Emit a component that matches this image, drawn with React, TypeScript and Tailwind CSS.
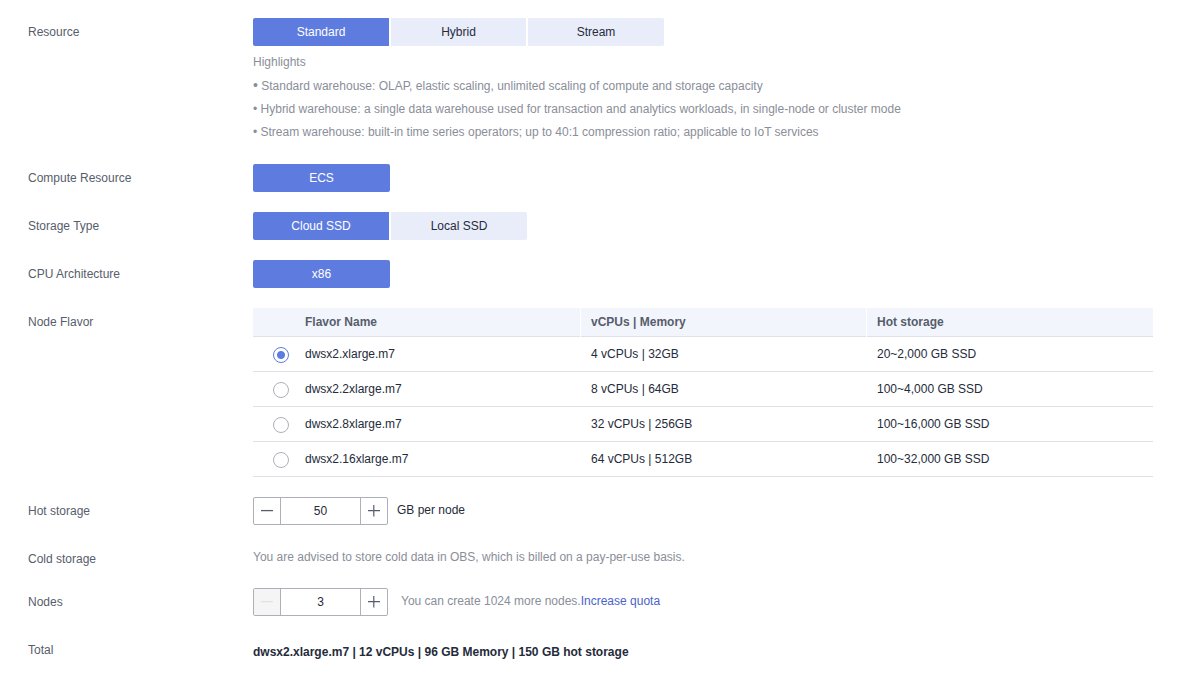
import { useState, type ReactNode } from "react";
import clsx from "clsx";

const flavors = [
  { name: "dwsx2.xlarge.m7", cpu: "4 vCPUs | 32GB", storage: "20~2,000 GB SSD" },
  { name: "dwsx2.2xlarge.m7", cpu: "8 vCPUs | 64GB", storage: "100~4,000 GB SSD" },
  { name: "dwsx2.8xlarge.m7", cpu: "32 vCPUs | 256GB", storage: "100~16,000 GB SSD" },
  { name: "dwsx2.16xlarge.m7", cpu: "64 vCPUs | 512GB", storage: "100~32,000 GB SSD" },
];

function Row({ label, htmlFor, children }: { label: string; htmlFor?: string; children: ReactNode }) {
  return (
    <div className="flex items-start">
      <div className="w-[225px] shrink-0 leading-7 text-[#575d6c]">
        {htmlFor ? <label htmlFor={htmlFor}>{label}</label> : label}
      </div>
      <div className="min-w-0 flex-1">{children}</div>
    </div>
  );
}

function Segmented({ label, options }: { label: string; options: string[] }) {
  const [active, setActive] = useState(options[0]);
  return (
    <div role="group" aria-label={label} className="flex w-fit overflow-hidden rounded-xs">
      {options.map((option) => (
        <button
          key={option}
          type="button"
          aria-pressed={option === active}
          onClick={() => setActive(option)}
          className={clsx(
            "h-7 w-[137px] cursor-pointer border-white not-first:border-l not-last:border-r",
            option === active ? "bg-[#5e7ce0] text-white" : "bg-[#e9edfa] text-[#252b3a]",
          )}
        >
          {option}
        </button>
      ))}
    </div>
  );
}

function Stepper({ id, initial, min, step }: { id: string; initial: number; min: number; step: number }) {
  const [value, setValue] = useState(initial);
  const atMin = value <= min;
  return (
    <div className="flex h-7 w-[135px] overflow-hidden rounded-xs border border-[#adb0b8]">
      <button
        type="button"
        aria-label="Decrease"
        disabled={atMin}
        onClick={() => setValue(value - step)}
        className={clsx(
          "flex w-[26px] items-center justify-center",
          atMin ? "bg-[#f5f5f6] text-[#dfe1e6]" : "text-[#575d6c]",
        )}
      >
        <svg width="12" height="12" viewBox="0 0 12 12" fill="none" stroke="currentColor" strokeWidth="1.3">
          <path d="M0 5.6h12" />
        </svg>
      </button>
      <input
        id={id}
        value={value}
        onChange={(e) => setValue(Number(e.target.value) || 0)}
        className="min-w-0 flex-1 border-x border-[#adb0b8] text-center text-[#252b3a] outline-none"
      />
      <button
        type="button"
        aria-label="Increase"
        onClick={() => setValue(value + step)}
        className="flex w-[26px] items-center justify-center text-[#575d6c]"
      >
        <svg width="12" height="12" viewBox="0 0 12 12" fill="none" stroke="currentColor" strokeWidth="1.2">
          <path d="M0 5.6h12M5.8 0v11.5" />
        </svg>
      </button>
    </div>
  );
}

function FlavorTable() {
  const [selected, setSelected] = useState(flavors[0].name);
  return (
    <table className="w-full table-fixed border-collapse text-left">
      <colgroup>
        <col className="w-[42px]" />
        <col />
        <col />
        <col />
      </colgroup>
      <thead>
        <tr className="h-[29px] bg-[#f2f5fc] text-[#575d6c] shadow-[inset_0_-1px_0_#dfe1e6]">
          <th />
          <th className="px-2.5 pb-0.5 shadow-[inset_-1px_0_0_#fff]">Flavor Name</th>
          <th className="px-2.5 pb-0.5 shadow-[inset_-1px_0_0_#fff]">vCPUs | Memory</th>
          <th className="px-2.5 pb-0.5">Hot storage</th>
        </tr>
      </thead>
      <tbody className="text-[#252b3a]">
        {flavors.map((f, i) => (
          <tr key={f.name} className="h-[35px] shadow-[inset_0_-1px_0_#dfe1e6]">
            <td className="pt-px pl-5 align-middle">
              <input
                type="radio"
                name="flavor"
                aria-labelledby={`flavor-${i}`}
                checked={selected === f.name}
                onChange={() => setSelected(f.name)}
                className="block size-4 appearance-none rounded-full border border-[#adb0b8] bg-white checked:border-[#5e7ce0] checked:bg-[radial-gradient(circle,#5e7ce0_3.5px,#fff_4.5px)]"
              />
            </td>
            <td id={`flavor-${i}`} className="px-2.5 pb-0.5">{f.name}</td>
            <td className="px-2.5 pb-0.5">{f.cpu}</td>
            <td className="px-2.5 pb-0.5">{f.storage}</td>
          </tr>
        ))}
      </tbody>
    </table>
  );
}

export default function App() {
  return (
    <main className="min-h-screen bg-white pt-[18px] pr-[35px] pb-7 pl-7 font-['Liberation_Sans',Arial,sans-serif] text-[12px]">
      <div className="flex flex-col gap-5">
        <Row label="Resource">
          <Segmented label="Resource" options={["Standard", "Hybrid", "Stream"]} />
          <div className="pt-1 text-[#8a8e99]">
            <p className="leading-6">Highlights</p>
            <ul className="pt-px leading-[23px]">
              <li>
                <span className="text-[14px] leading-none">•</span> Standard warehouse: OLAP, elastic scaling, unlimited
                scaling of compute and storage capacity
              </li>
              <li>
                • Hybrid warehouse: a single data warehouse used for transaction and analytics workloads, in single-node or
                cluster mode
              </li>
              <li>
                • Stream warehouse: built-in time series operators; up to 40:1 compression ratio; applicable to IoT services
              </li>
            </ul>
          </div>
        </Row>
        <Row label="Compute Resource">
          <Segmented label="Compute Resource" options={["ECS"]} />
        </Row>
        <Row label="Storage Type">
          <Segmented label="Storage Type" options={["Cloud SSD", "Local SSD"]} />
        </Row>
        <Row label="CPU Architecture">
          <Segmented label="CPU Architecture" options={["x86"]} />
        </Row>
        <Row label="Node Flavor">
          <FlavorTable />
        </Row>
        <Row label="Hot storage" htmlFor="hot-storage">
          <div className="flex gap-[9px]">
            <Stepper id="hot-storage" initial={50} min={20} step={10} />
            <span className="leading-[26px] text-[#252b3a]">GB per node</span>
          </div>
        </Row>
        <div className="flex flex-col gap-[15px]">
          <Row label="Cold storage">
            <p className="leading-6 text-[#8a8e99]">
              You are advised to store cold data in OBS, which is billed on a pay-per-use basis.
            </p>
          </Row>
          <Row label="Nodes" htmlFor="nodes">
            <div className="flex gap-[13px]">
              <Stepper id="nodes" initial={3} min={3} step={1} />
              <span className="leading-[26px] text-[#8a8e99]">
                You can create 1024 more nodes.
                <a href="#quota" className="text-[#4a62cc]">Increase quota</a>
              </span>
            </div>
          </Row>
        </div>
        <Row label="Total">
          <p className="leading-8 font-bold text-[#252b3a]">
            dwsx2.xlarge.m7 | 12 vCPUs | 96 GB Memory | 150 GB hot storage
          </p>
        </Row>
      </div>
    </main>
  );
}
